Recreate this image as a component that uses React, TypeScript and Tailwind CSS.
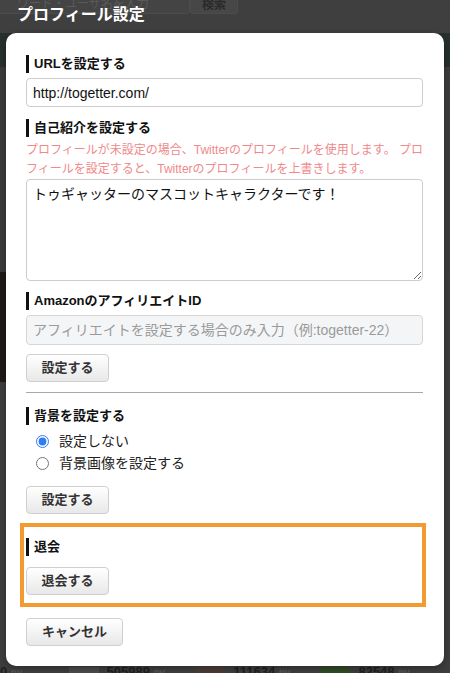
import React from "react";

const font = "font-['Liberation_Sans','Noto_Sans_CJK_JP',sans-serif]";

const Heading = ({ children }: { children: React.ReactNode }) => (
  <div className="flex h-[18px] items-center border-l-[3px] border-[#111] pl-[5px] text-[13px] font-bold leading-[18px] text-[#111]">
    {children}
  </div>
);

const Button = ({ label, width }: { label: string; width: string }) => (
  <button
    className={`${width} h-[28px] rounded-[4px] border border-[#cfcfcf] bg-gradient-to-b from-white to-[#e8e8e8] text-[13px] font-bold text-[#333]`}
  >
    {label}
  </button>
);

const Backdrop = () => (
  <div className="absolute inset-0">
    {/* dimmed page behind the dialog */}
    <div className="flex h-[33px] bg-[#3f3f3f]">
      <div className="ml-[-4px] mt-[-4px] h-[18px] w-[194px] rounded-[3px] border border-[#4c4c4c] bg-[#444] pl-[20px] text-[12px] leading-[14px] text-[#5a5a5a]">
        ワード・ユーザ名を入力
      </div>
      <div className="mt-[-4px] h-[18px] w-[48px] rounded-[3px] border border-[#4c4c4c] bg-[#474747] text-center text-[12px] font-bold leading-[16px] text-[#2a2a2a]">
        検索
      </div>
    </div>
    <div className="h-[34px] bg-[#27302c]" />
    <div className="flex h-[205px]">
      <div className="w-[6px] bg-[#3a3a3a]" />
      <div className="flex-1" />
      <div className="w-[6px] bg-[#3c3c3c]" />
    </div>
    <div className="flex h-[110px]">
      <div className="w-[6px] bg-[#1d1a18]" />
      <div className="flex-1" />
      <div className="w-[6px] bg-[#3d3d3d]" />
    </div>
    <div className="h-[283px]" />
    <div className="flex items-start gap-[8px] text-[13px] font-bold leading-[14px] text-[#1f1f1f]">
      <span>0 <span className="text-[10px] text-[#555]">pv</span></span>
      <div className="ml-[38px] mt-[2px] h-[10px] w-[30px] bg-[#4a4a4a]" />
      <span>505989 <span className="text-[10px] text-[#555]">pv</span></span>
      <div className="ml-[22px] mt-[2px] h-[10px] w-[30px] bg-[#4a3b36]" />
      <span>111634 <span className="text-[10px] text-[#555]">pv</span></span>
      <div className="ml-[22px] mt-[2px] h-[10px] w-[30px] bg-[#2f4a25]" />
      <span>82548 <span className="text-[10px] text-[#555]">pv</span></span>
    </div>
  </div>
);

export default function App() {
  return (
    <div className={`relative h-[673px] w-[450px] overflow-hidden bg-[#3d3d3d] ${font}`}>
      <Backdrop />
      <div className="relative">
        <div className="h-[33px] pl-[17px] pt-[4px] text-[16px] font-bold leading-[22px] text-white">
          プロフィール設定
        </div>
        <div className="mx-[6px] rounded-[10px] bg-white pb-[20px] pl-[20px] pr-[21px] pt-[22px] shadow-[0_2px_6px_rgba(0,0,0,0.3)]">
          <Heading>URLを設定する</Heading>
          <input
            className="mt-[5px] block h-[29px] w-full rounded-[4px] border border-[#cdcdcd] px-[6px] text-[14px] text-[#111] outline-none"
            defaultValue="http://togetter.com/"
          />

          <div className="mt-[12px]">
            <Heading>自己紹介を設定する</Heading>
          </div>
          <p className="mt-[4px] text-[12px] leading-[19px] text-[#f0898a]">
            プロフィールが未設定の場合、Twitterのプロフィールを使用します。 プロフィールを設定すると、Twitterのプロフィールを上書きします。
          </p>
          <textarea
            className="block h-[102px] w-full rounded-[4px] border border-[#cdcdcd] px-[6px] py-[4px] text-[14px] leading-[20px] text-[#111] outline-none"
            defaultValue="トゥギャッターのマスコットキャラクターです！"
          />

          <div className="mt-[11px]">
            <Heading>AmazonのアフィリエイトID</Heading>
          </div>
          <input
            className="mt-[5px] block h-[30px] w-full rounded-[4px] border border-[#d6d6d6] bg-[#f4f5f7] px-[6px] text-[14px] outline-none placeholder:text-[#9a9a9a]"
            placeholder="アフィリエイトを設定する場合のみ入力（例:togetter-22）"
          />
          <div className="mt-[9px]">
            <Button label="設定する" width="w-[83px]" />
          </div>

          <div className="mt-[10px] h-px bg-[#a8a8a8]" />

          <div className="mt-[14px]">
            <Heading>背景を設定する</Heading>
          </div>
          <div className="mt-[5px] pl-[10px] text-[14px] text-[#222]">
            <label className="flex h-[22px] items-center gap-[10px]">
              <input
                type="radio"
                name="bg"
                defaultChecked
                className="m-0 h-[13px] w-[13px] accent-[#2f7cf6]"
              />
              設定しない
            </label>
            <label className="flex h-[22px] items-center gap-[10px]">
              <input type="radio" name="bg" className="m-0 h-[13px] w-[13px] accent-[#2f7cf6]" />
              背景画像を設定する
            </label>
          </div>
          <div className="mt-[12px]">
            <Button label="設定する" width="w-[83px]" />
          </div>

          <div className="ml-[-6px] mr-[-3px] mt-[9px] border-[4px] border-[#f39a30] pb-[8px] pl-[2px] pt-[11px]">
            <Heading>退会</Heading>
            <div className="mt-[11px]">
              <Button label="退会する" width="w-[83px]" />
            </div>
          </div>

          <div className="mt-[11px]">
            <Button label="キャンセル" width="w-[97px]" />
          </div>
        </div>
      </div>
    </div>
  );
}
